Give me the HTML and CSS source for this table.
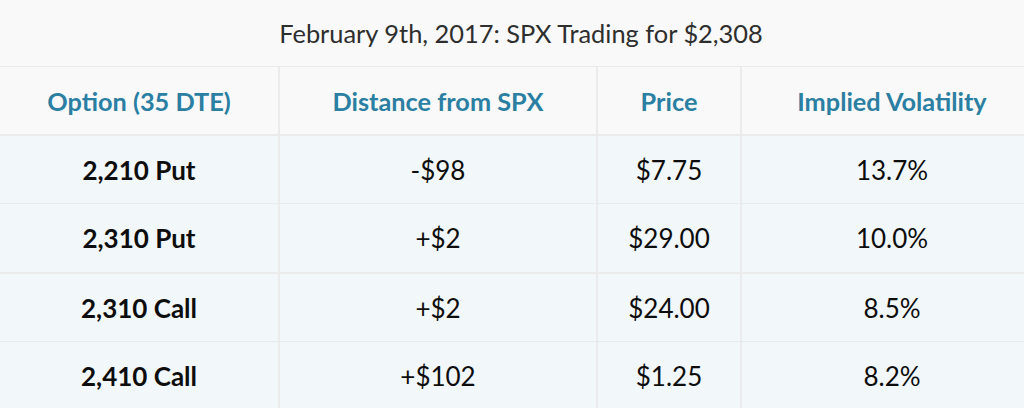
FILE: index.html
```html
<!DOCTYPE html>
<html lang="en">
<head>
<meta charset="utf-8">
<title>SPX Options</title>
<link rel="stylesheet" href="styles.css">
</head>
<body>
<div class="sheet">
  <div class="title">February 9th, 2017: SPX Trading for $2,308</div>
  <div class="row head">
    <div class="cell">Option (35 DTE)</div>
    <div class="cell">Distance from SPX</div>
    <div class="cell">Price</div>
    <div class="cell">Implied Volatility</div>
  </div>
  <div class="row body thin">
    <div class="cell opt">2,210 Put</div>
    <div class="cell">-$98</div>
    <div class="cell">$7.75</div>
    <div class="cell">13.7%</div>
  </div>
  <div class="row body thick">
    <div class="cell opt">2,310 Put</div>
    <div class="cell">+$2</div>
    <div class="cell">$29.00</div>
    <div class="cell">10.0%</div>
  </div>
  <div class="row body thin">
    <div class="cell opt">2,310 Call</div>
    <div class="cell">+$2</div>
    <div class="cell">$24.00</div>
    <div class="cell">8.5%</div>
  </div>
  <div class="row body last">
    <div class="cell opt">2,410 Call</div>
    <div class="cell">+$102</div>
    <div class="cell">$1.25</div>
    <div class="cell">8.2%</div>
  </div>
</div>
</body>
</html>
```

FILE: styles.css
```css
* { box-sizing: border-box; }
html, body { margin: 0; padding: 0; }
body {
  background: #f9f9f9;
  overflow: hidden;
  font-family: "Lato", "Noto Sans", sans-serif;
}
.sheet {
  width: 1042px;
}
.title {
  height: 67px;
  display: flex;
  align-items: center;
  justify-content: center;
  font-size: 25.4px;
  color: #2e2e2e;
  border-bottom: 1px solid #ebebeb;
  background: #f9f9f9;
}
.row {
  display: grid;
  grid-template-columns: 278px 318px 144px 1fr;
}
.cell {
  display: flex;
  align-items: center;
  justify-content: center;
  font-size: 26px;
  border-left: 2px solid #ebebeb;
}
.cell:first-child { border-left: none; }
.head {
  height: 69px;
  background: #f9f9f9;
  border-bottom: 2px solid #ebebeb;
}
.head .cell {
  color: #2a7fa2;
  font-weight: 700;
  font-size: 25.3px;
}
.body {
  background: #f2f7fa;
  color: #0d0d0d;
}
.body.thin { height: 68px; border-bottom: 1px solid #e8eaeb; }
.body.thick { height: 70px; border-bottom: 2px solid #ebebeb; }
.body.last { height: 68px; }
.opt { font-weight: 700; }
```
